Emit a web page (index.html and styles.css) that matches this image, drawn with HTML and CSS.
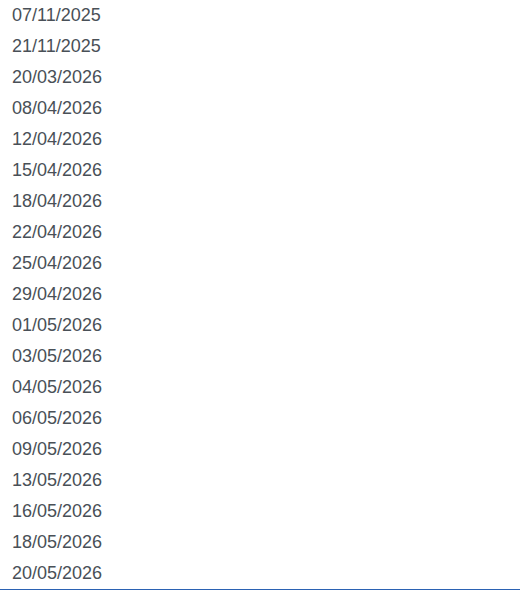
FILE: index.html
```html
<!DOCTYPE html>
<html lang="en">
<head>
    <meta charset="UTF-8">
    <meta name="viewport" content="width=device-width, initial-scale=1.0">
    <title>Dates</title>
    <link rel="stylesheet" href="styles.css">
</head>
<body>
    <ul class="date-list">
        <li>07/11/2025</li>
        <li>21/11/2025</li>
        <li>20/03/2026</li>
        <li>08/04/2026</li>
        <li>12/04/2026</li>
        <li>15/04/2026</li>
        <li>18/04/2026</li>
        <li>22/04/2026</li>
        <li>25/04/2026</li>
        <li>29/04/2026</li>
        <li>01/05/2026</li>
        <li>03/05/2026</li>
        <li>04/05/2026</li>
        <li>06/05/2026</li>
        <li>09/05/2026</li>
        <li>13/05/2026</li>
        <li>16/05/2026</li>
        <li>18/05/2026</li>
        <li>20/05/2026</li>
    </ul>
</body>
</html>
```

FILE: styles.css
```css
body {
    font-family: "Liberation Sans", Arial, sans-serif;
    background-color: #fff;
    margin: 0;
    padding: 0;
}

.date-list {
    list-style: none;
    margin: 0;
    padding: 0;
    border-bottom: 1px solid #2b62b3;
}

.date-list li {
    height: 31px;
    line-height: 31px;
    padding-left: 12px;
    font-size: 18px;
    color: #495057;
}
```
